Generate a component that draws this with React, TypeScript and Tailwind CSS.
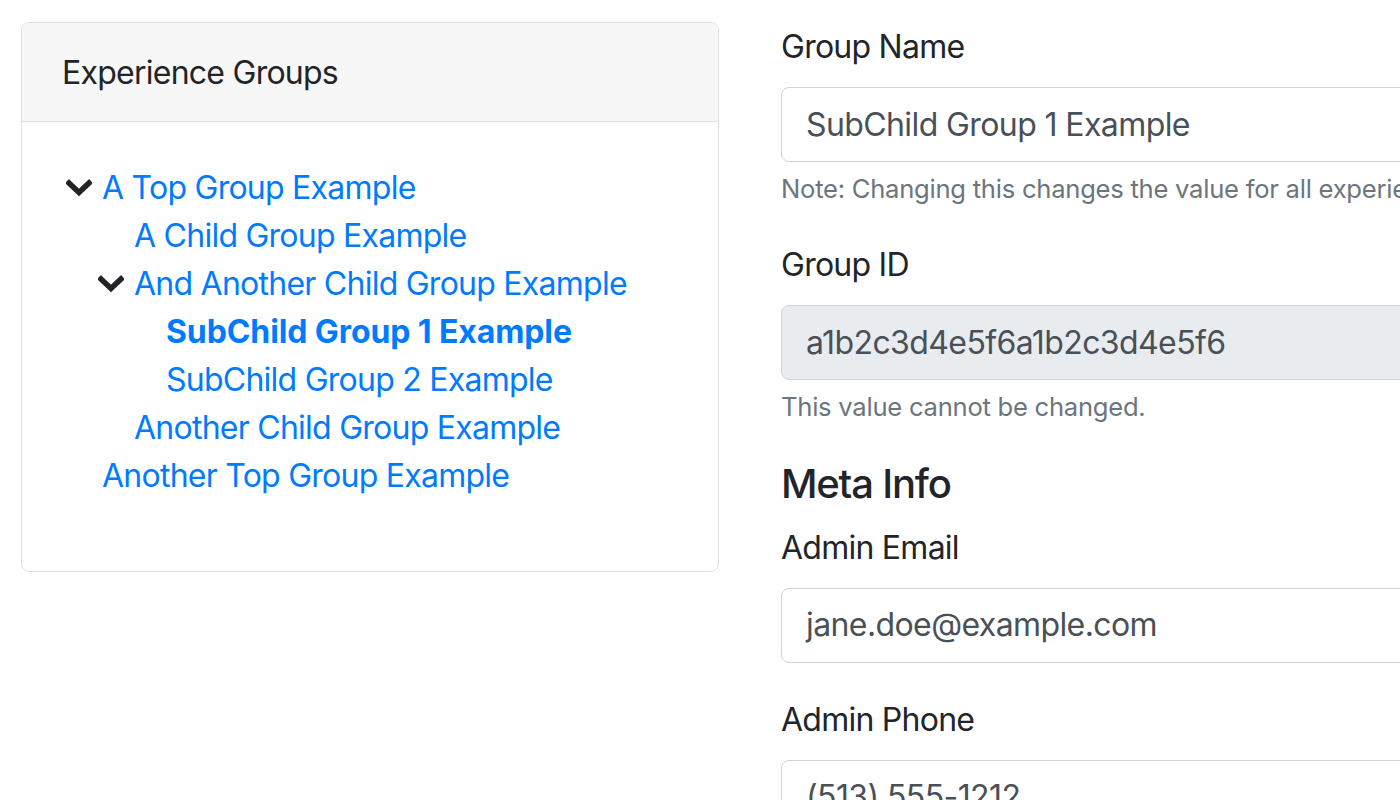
import React from 'react';

type Node = {
  label: string;
  open?: boolean;
  active?: boolean;
  children?: Node[];
};

const tree: Node[] = [
  {
    label: 'A Top Group Example',
    open: true,
    children: [
      { label: 'A Child Group Example' },
      {
        label: 'And Another Child Group Example',
        open: true,
        children: [
          { label: 'SubChild Group 1 Example', active: true },
          { label: 'SubChild Group 2 Example' },
        ],
      },
      { label: 'Another Child Group Example' },
    ],
  },
  { label: 'Another Top Group Example' },
];

const Chevron: React.FC = () => (
  <svg width="26" height="18" viewBox="0 0 26 18" className="block">
    <polyline
      points="3,4 13,13.5 23,4"
      fill="none"
      stroke="#212529"
      strokeWidth="5.5"
      strokeLinecap="square"
    />
  </svg>
);

const TreeList: React.FC<{ nodes: Node[]; nested?: boolean }> = ({ nodes, nested }) => (
  <ul className={nested ? 'pl-[32px]' : ''}>
    {nodes.map((n) => (
      <li key={n.label}>
        <div className="flex items-center h-[48px]">
          <span className="w-[40px] flex items-center pl-[4px] shrink-0">
            {n.children && n.open ? <Chevron /> : null}
          </span>
          <a
            href="#"
            className={`text-[#007bff] whitespace-nowrap ${
              n.active ? 'font-bold tracking-[-0.1px]' : ''
            }`}
          >
            {n.label}
          </a>
        </div>
        {n.children && n.open ? <TreeList nodes={n.children} nested /> : null}
      </li>
    ))}
  </ul>
);

const Field: React.FC<{
  label: string;
  value: string;
  help?: string;
  readOnly?: boolean;
}> = ({ label, value, help, readOnly }) => (
  <div className="mb-[33px]">
    <label className="block mb-[16px] leading-[48px] text-[#212529]">{label}</label>
    <div
      className={`h-[75px] border border-[#ced4da] rounded-[8px] px-[24px] flex items-center text-[#495057] tracking-[-0.6px] whitespace-nowrap ${
        readOnly ? 'bg-[#e9ecef]' : 'bg-white'
      }`}
    >
      {value}
    </div>
    {help ? (
      <small className="block mt-[8px] text-[25.6px] leading-[38.4px] tracking-[-0.25px] text-[#6c757d] whitespace-nowrap">
        {help}
      </small>
    ) : null}
  </div>
);

export default function App() {
  return (
    <div
      className="w-[1400px] h-[800px] overflow-hidden bg-white text-[32px] leading-[48px] tracking-[-0.75px] text-[#212529]"
      style={{ fontFamily: 'Inter, "Noto Sans", "Liberation Sans", sans-serif' }}
    >
      <div className="flex gap-[62px] pl-[21px] pt-[22px]">
        <div className="w-[698px] shrink-0 self-start border border-[#dfdfdf] rounded-[8px] overflow-hidden">
          <div className="bg-[#f7f7f7] border-b border-[#dfdfdf] px-[40px] pt-[26px] pb-[24px] leading-[48px]">
            Experience Groups
          </div>
          <div className="px-[40px] pt-[42px] pb-[39px]">
            <div className="mb-[32px]">
              <TreeList nodes={tree} />
            </div>
          </div>
        </div>

        <div className="w-[900px] shrink-0 pt-[1px]">
          <Field
            label="Group Name"
            value="SubChild Group 1 Example"
            help="Note: Changing this changes the value for all experiences using this group."
          />
          <Field
            label="Group ID"
            value="a1b2c3d4e5f6a1b2c3d4e5f6"
            help="This value cannot be changed."
            readOnly
          />
          <h5 className="text-[40px] leading-[48px] font-medium tracking-[-1.2px] mb-[16px]">
            Meta Info
          </h5>
          <Field label="Admin Email" value="jane.doe@example.com" />
          <Field label="Admin Phone" value="(513) 555-1212" />
        </div>
      </div>
    </div>
  );
}
